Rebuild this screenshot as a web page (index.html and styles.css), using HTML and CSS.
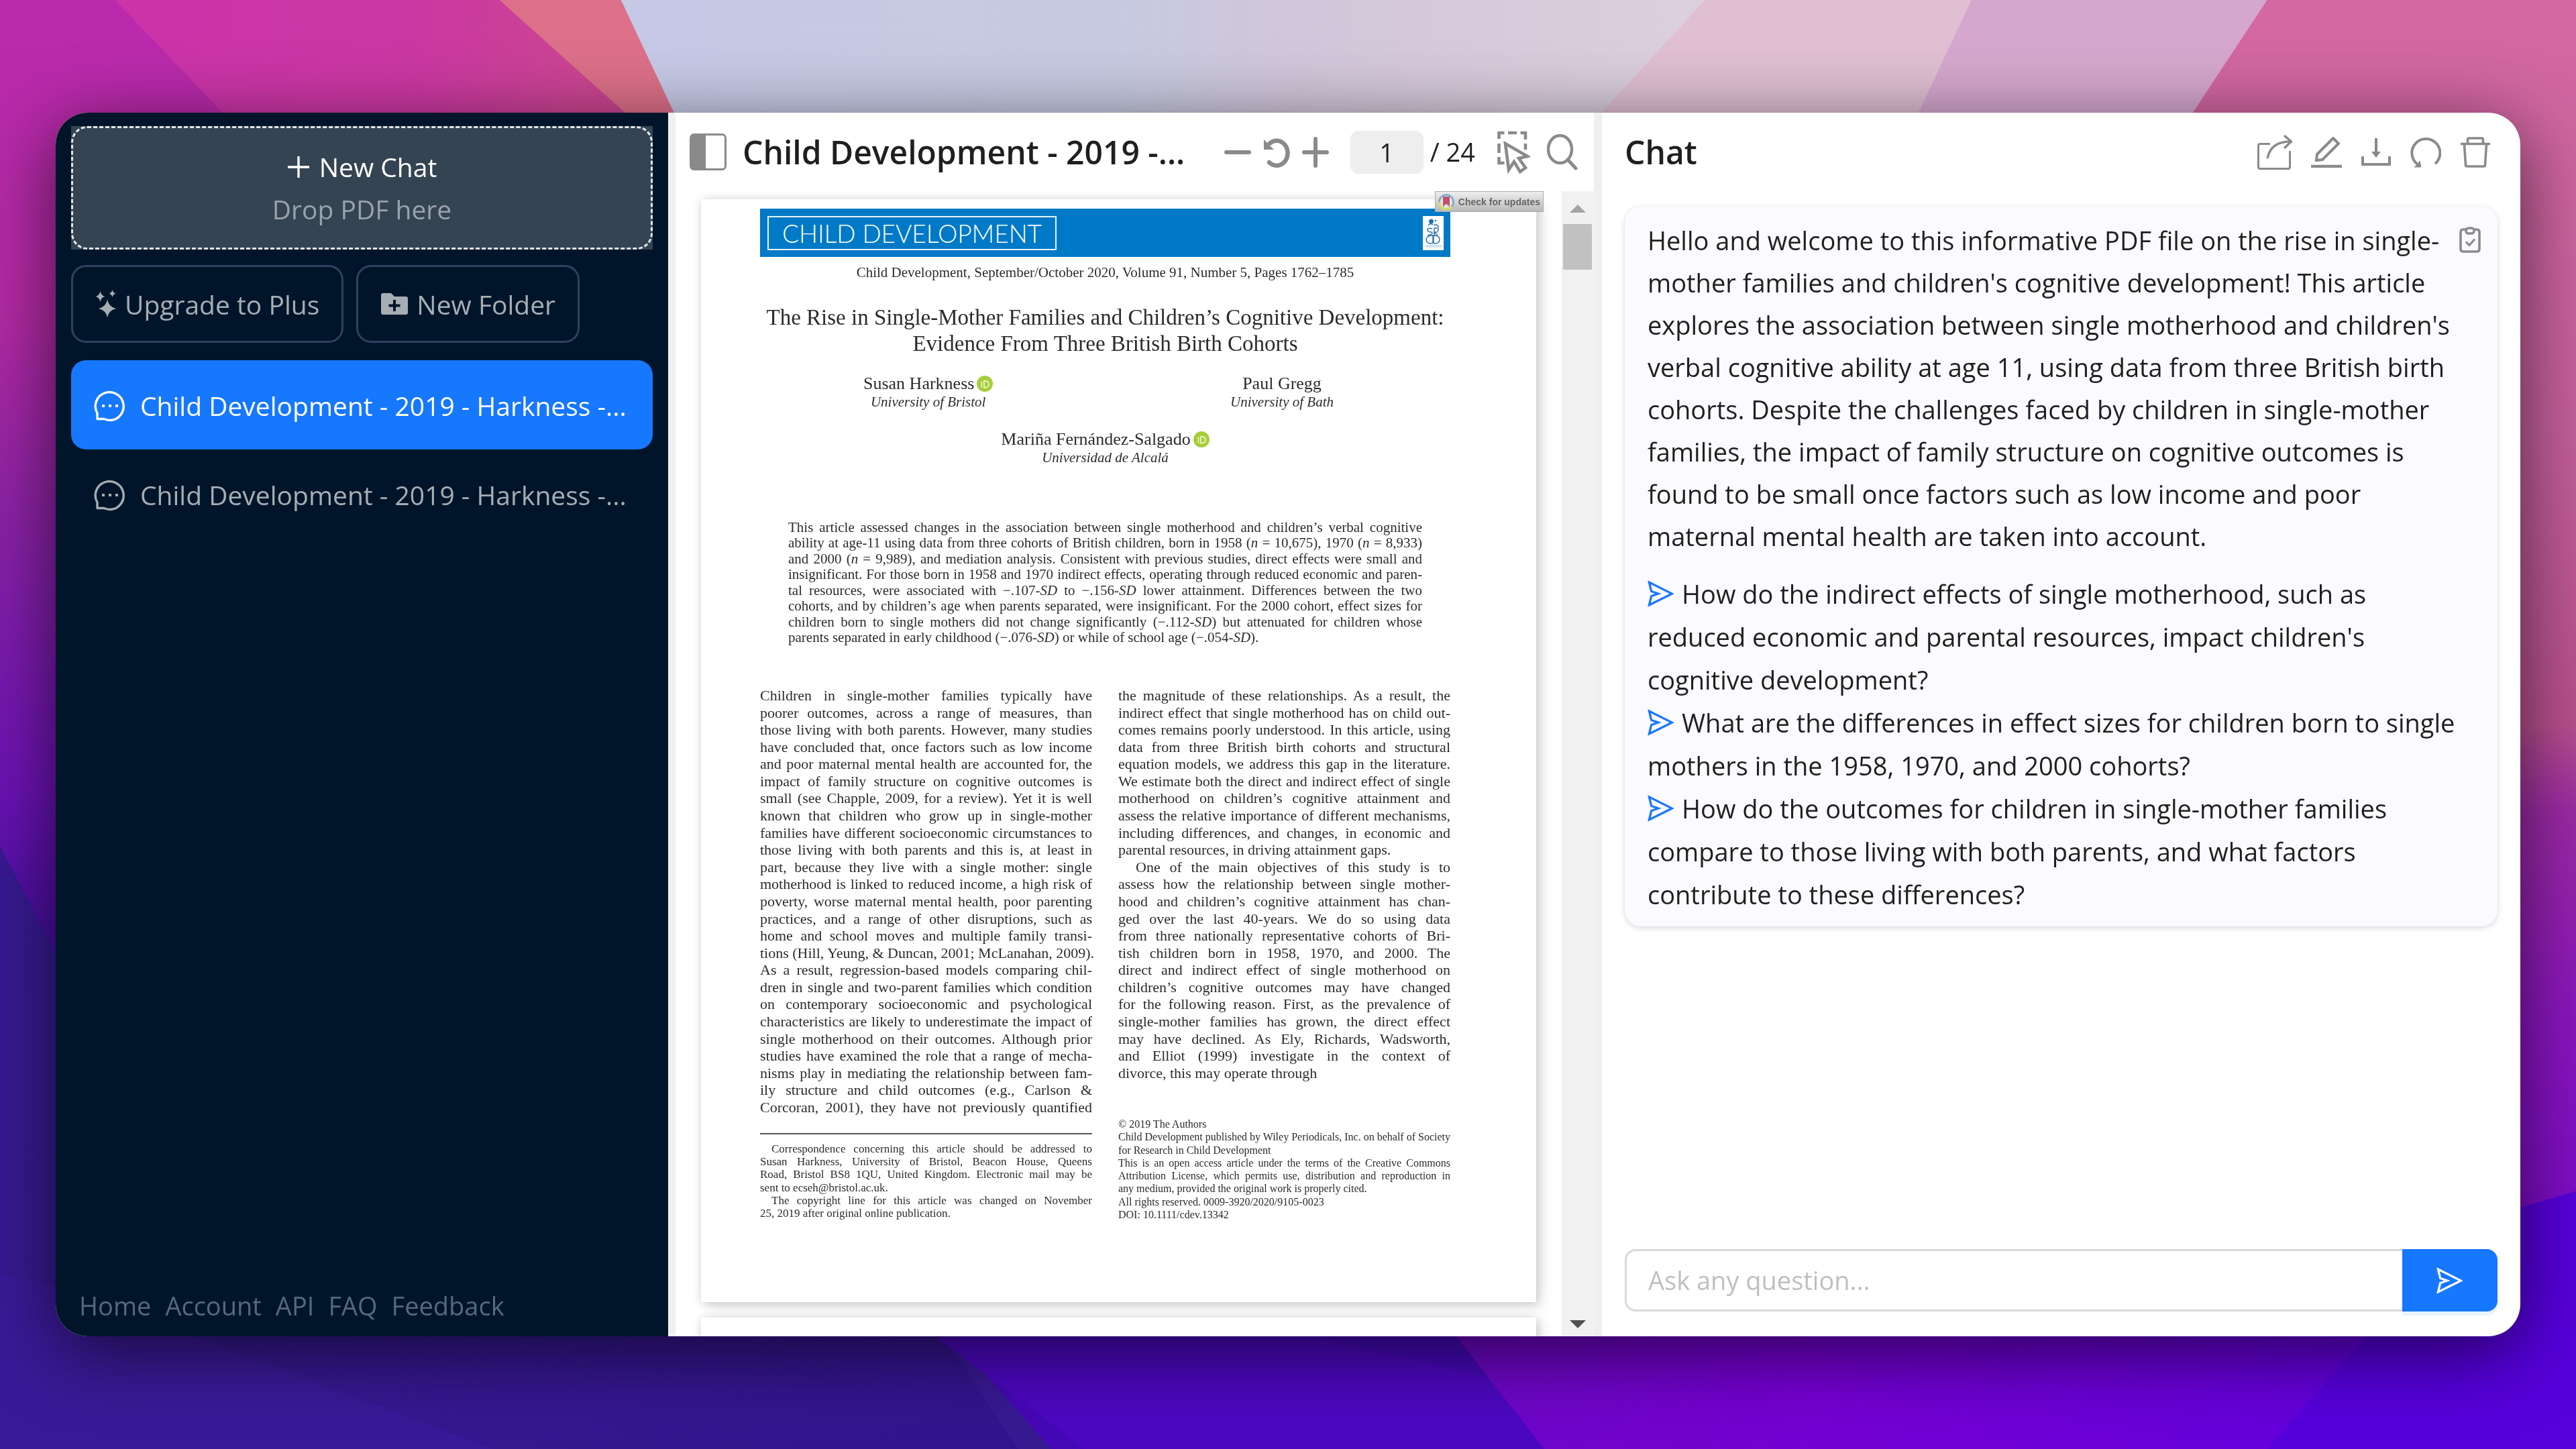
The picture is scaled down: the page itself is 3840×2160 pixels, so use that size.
FILE: index.html
```html
<!DOCTYPE html>
<html lang="en">
<head>
<meta charset="utf-8">
<title>Child Development - Chat</title>
<link rel="stylesheet" href="styles.css">
</head>
<body>
<svg class="wallpaper" viewBox="0 0 1568 882" preserveAspectRatio="none" aria-hidden="true">
  <defs>
    <linearGradient id="edge" x1="0" y1="0" x2="0" y2="1">
      <stop offset="0" stop-color="#bb2aad"/><stop offset=".22" stop-color="#b22aa4"/>
      <stop offset=".36" stop-color="#8a22a6"/><stop offset=".55" stop-color="#6a12b4"/>
      <stop offset=".64" stop-color="#4a0fa0"/><stop offset="1" stop-color="#371a92"/>
    </linearGradient>
    <linearGradient id="magenta" x1="0" y1="0" x2="1" y2="0">
      <stop offset="0" stop-color="#cb33aa"/><stop offset=".4" stop-color="#cb38a2"/><stop offset=".6" stop-color="#cb4592"/>
    </linearGradient>
    <linearGradient id="pale" x1="0" y1="0" x2="1" y2="0">
      <stop offset="0" stop-color="#c6c9e6"/><stop offset=".45" stop-color="#c6cae0"/>
      <stop offset=".62" stop-color="#d2c6da"/><stop offset="1" stop-color="#dccfde"/>
    </linearGradient>
    <linearGradient id="right" x1="0" y1="0" x2="0" y2="1">
      <stop offset="0" stop-color="#d468a2"/><stop offset=".3" stop-color="#c4609c"/>
      <stop offset=".5" stop-color="#b8508e"/><stop offset=".56" stop-color="#9c2aa4"/>
      <stop offset=".7" stop-color="#8a16be"/><stop offset="1" stop-color="#7000d4"/>
    </linearGradient>
    <linearGradient id="violet" x1="0" y1="0" x2="1" y2="0">
      <stop offset="0" stop-color="#6c08c4"/><stop offset=".4" stop-color="#7400d2"/><stop offset="1" stop-color="#6200dc"/>
    </linearGradient>
    <linearGradient id="indigo" x1="0" y1="0" x2="1" y2="0">
      <stop offset="0" stop-color="#371a92"/><stop offset="1" stop-color="#33148e"/>
    </linearGradient>
  </defs>
  <rect width="1568" height="882" fill="url(#edge)"/>
  <polygon points="70,0 320,0 540,200 261,200" fill="url(#magenta)"/>
  <polygon points="304,0 380,0 474,200 527,200" fill="#dc7089"/>
  <polygon points="378,0 1045,0 1000,200 472,200" fill="url(#pale)"/>
  <polygon points="1038,0 1210,0 1116,200 853,200" fill="#dfbfd1"/>
  <polygon points="1200,0 1390,0 1258,200 1106,200" fill="#d5a7ce"/>
  <polygon points="1380,0 1568,0 1568,882 1248,882 1248,200" fill="url(#right)"/>
  <polygon points="0,515 34,580 500,700 620,882 0,882" fill="url(#indigo)"/>
  <polygon points="0,775 34,782 300,882 0,882" fill="#3a1a98"/>
  <polygon points="480,700 900,760 1000,882 640,882" fill="#4508b6"/>
  <polygon points="570,814 800,814 1100,882 660,882" fill="#4c08c0"/>
  <polygon points="868,790 1450,790 1420,882 940,882" fill="url(#violet)"/>
  <polygon points="1568,725 1500,745 1380,882 1568,882" fill="#5600dc"/>
</svg>

<main class="window">
  <aside class="sidebar">
    <div class="dropzone">
      <button class="dropzone-button" type="button">
        <span class="new-chat">
          <svg class="icon-plus" viewBox="0 0 34 34"><path d="M17 1v32M1 17h32" fill="none" stroke="currentColor" stroke-width="3.4"/></svg>
          New Chat
        </span>
        <span class="drop-hint">Drop PDF here</span>
      </button>
    </div>
    <div class="actions">
      <button class="outline-button upgrade" type="button">
        <svg class="icon-spark" viewBox="0 0 32 42"><path d="M18 14.500q2 11 13 13.500q-11 2.500-13 13.500q-2-11-13-13.500q11-2.500 13-13.500zM7.500 2q1.200 6.600 7 8q-5.800 1.400-7 8q-1.200-6.600-7-8q5.800-1.400 7-8zM25.500 0q.9 4.500 5 5.500q-4.100 1-5 5.500q-.9-4.500-5-5.500q4.100-1 5-5.500z" fill="currentColor"/></svg>
        Upgrade to Plus
      </button>
      <button class="outline-button" type="button">
        <svg class="icon-folder" viewBox="0 0 42 34"><path d="M4 1h12l5 5h17q3 0 3 3v21q0 3-3 3H4q-3 0-3-3V4q0-3 3-3z" fill="currentColor"/><path d="M21 11v17M12.500 19.500h17" stroke="#001529" stroke-width="4"/></svg>
        New Folder
      </button>
    </div>
    <nav class="chats">
      <a class="chat-link active" href="#"><svg class="icon-bubble" viewBox="0 0 48 48"><path d="M5 43.500V35A21 21 0 1 1 25 45.500Q19.500 45.500 15 43.500z" fill="none" stroke="currentColor" stroke-width="3.400" stroke-linejoin="round"/><path d="M12 22h4v4h-4zM22 22h4v4h-4zM32 22h4v4h-4z" fill="currentColor"/></svg>Child Development - 2019 - Harkness -...</a>
      <a class="chat-link" href="#"><svg class="icon-bubble" viewBox="0 0 48 48"><path d="M5 43.500V35A21 21 0 1 1 25 45.500Q19.500 45.500 15 43.500z" fill="none" stroke="currentColor" stroke-width="3.400" stroke-linejoin="round"/><path d="M12 22h4v4h-4zM22 22h4v4h-4zM32 22h4v4h-4z" fill="currentColor"/></svg>Child Development - 2019 - Harkness -...</a>
    </nav>
    <footer class="links">
      <a href="#">Home</a><a href="#">Account</a><a href="#">API</a><a href="#">FAQ</a><a href="#">Feedback</a>
    </footer>
  </aside>

  <section class="reader">
    <header class="toolbar">
      <button class="tool" type="button" aria-label="Toggle sidebar"><svg class="icon-panel" viewBox="0 0 55 55"><rect x="1.500" y="1.500" width="52" height="52" rx="5" fill="#fff" stroke="#8a8a8a" stroke-width="3"/><path d="M6 1h18v53H6q-5 0-5-5V6q0-5 5-5z" fill="#8a8a8a"/></svg></button>
      <h1 class="doc-title">Child Development - 2019 -...</h1>
      <div class="zoom-tools">
        <button class="tool" type="button" aria-label="Zoom out"><svg class="icon-zoom" viewBox="0 0 40 46"><path d="M3 23h34" stroke="currentColor" stroke-width="6" stroke-linecap="round"/></svg></button>
        <button class="tool" type="button" aria-label="Reset zoom"><svg class="icon-zoom" viewBox="0 0 40 46"><path d="M9 10.500A16.500 18.500 0 1 1 9 38" fill="none" stroke="currentColor" stroke-width="6.500" stroke-linecap="round"/><path d="M1 4l15 15H1z" fill="currentColor"/></svg></button>
        <button class="tool" type="button" aria-label="Zoom in"><svg class="icon-zoom" viewBox="0 0 40 46"><path d="M3 23h34M20 3v40" stroke="currentColor" stroke-width="6" stroke-linecap="round"/></svg></button>
      </div>
      <div class="pager">
        <input class="page-input" type="text" value="1" aria-label="Page">
        <span>/ 24</span>
      </div>
      <div class="select-tools">
        <button class="tool" type="button" aria-label="Select area"><svg class="icon-select" viewBox="0 0 49 64"><path d="M2.500 12V3h8M16 3h13M34.500 3H42v10M42 19v9M2.500 19v14M2.500 39v9h8" fill="none" stroke="currentColor" stroke-width="4.600"/><path d="M12 19l33 19-13 3 10 14-8 6-9-15-8 12z" fill="#fff" stroke="currentColor" stroke-width="4.600"/></svg></button>
        <button class="tool" type="button" aria-label="Search"><svg class="icon-search" viewBox="0 0 46 54"><ellipse cx="19.500" cy="22.500" rx="17.500" ry="20.500" fill="none" stroke="currentColor" stroke-width="4.400"/><path d="M31 38l12 13" stroke="currentColor" stroke-width="5" stroke-linecap="round"/></svg></button>
      </div>
    </header>

    <div class="viewer">
      <div class="pages">
        <article class="page">
          <div class="badge"><svg class="icon-mark" viewBox="0 0 24 24"><circle cx="12" cy="12" r="10.500" fill="#e6e6e6" stroke="#79a9c8" stroke-width="2.500"/><path d="M1.500 12A10.500 10.500 0 0 0 20 19" fill="none" stroke="#cfdc74" stroke-width="3.500"/><path d="M7 4h10v15l-5-4-5 4z" fill="#c4526e"/></svg>Check for updates</div>
          <div class="banner">
            <span class="journal">CHILD DEVELOPMENT</span>
            <svg class="society" viewBox="0 0 31 51"><rect width="31" height="51" fill="#fff"/><circle cx="12.500" cy="8" r="3.500" fill="#1c74bb"/><circle cx="19" cy="7" r="1.300" fill="#1c74bb"/><path d="M8 14q3-4 7-1M16 14q5-3 8 3M14 19q-8-2-7 2 1 3 6 3 4 3-6 5M17 29V18h5q3 3-1 6h-4l5 5M15 29q-9 0-10 6 0 6 8 6 2 0 2-3zM16 29q9 0 9 6 0 6-7 6-2 0-2-3z" fill="none" stroke="#2b6fa8" stroke-width="1.400"/><path d="M4 44h24M4 46h24" stroke="#a9c3da" stroke-width="1"/></svg>
          </div>
          <p class="citation">Child Development, September/October 2020, Volume 91, Number 5, Pages 1762–1785</p>
          <h2 class="paper-title">The Rise in Single-Mother Families and Children’s Cognitive Development:<br>Evidence From Three British Birth Cohorts</h2>
          <div class="authors">
            <div class="author"><span class="name">Susan Harkness<svg class="orcid" viewBox="0 0 24 24"><circle cx="12" cy="12" r="12" fill="#a6ce39"/><path d="M7.500 8.500v9M11 8v9.500h3q4-1 4-4.800T14 8z" fill="none" stroke="#e8f3c6" stroke-width="1.800"/></svg></span><em>University of Bristol</em></div>
            <div class="author"><span class="name">Paul Gregg</span><em>University of Bath</em></div>
          </div>
          <div class="author last"><span class="name">Mariña Fernández-Salgado<svg class="orcid" viewBox="0 0 24 24"><circle cx="12" cy="12" r="12" fill="#a6ce39"/><path d="M7.500 8.500v9M11 8v9.500h3q4-1 4-4.800T14 8z" fill="none" stroke="#e8f3c6" stroke-width="1.800"/></svg></span><em>Universidad de Alcalá</em></div>

          <div class="lines abstract"><p>
            <span>This article assessed changes in the association between single motherhood and children’s verbal cognitive</span>
            <span>ability at age-11 using data from three cohorts of British children, born in 1958 (<i>n</i> = 10,675), 1970 (<i>n</i> = 8,933)</span>
            <span>and 2000 (<i>n</i> = 9,989), and mediation analysis. Consistent with previous studies, direct effects were small and</span>
            <span>insignificant. For those born in 1958 and 1970 indirect effects, operating through reduced economic and paren-</span>
            <span>tal resources, were associated with −.107-<i>SD</i> to −.156-<i>SD</i> lower attainment. Differences between the two</span>
            <span>cohorts, and by children’s age when parents separated, were insignificant. For the 2000 cohort, effect sizes for</span>
            <span>children born to single mothers did not change significantly (−.112-<i>SD</i>) but attenuated for children whose</span>
            <span class="end">parents separated in early childhood (−.076-<i>SD</i>) or while of school age (−.054-<i>SD</i>).</span>
          </p></div>

          <div class="columns">
            <div class="column">
              <div class="lines body-left"><p>
                <span>Children in single-mother families typically have</span>
                <span>poorer outcomes, across a range of measures, than</span>
                <span>those living with both parents. However, many studies</span>
                <span>have concluded that, once factors such as low income</span>
                <span>and poor maternal mental health are accounted for, the</span>
                <span>impact of family structure on cognitive outcomes is</span>
                <span>small (see Chapple, 2009, for a review). Yet it is well</span>
                <span>known that children who grow up in single-mother</span>
                <span>families have different socioeconomic circumstances to</span>
                <span>those living with both parents and this is, at least in</span>
                <span>part, because they live with a single mother: single</span>
                <span>motherhood is linked to reduced income, a high risk of</span>
                <span>poverty, worse maternal mental health, poor parenting</span>
                <span>practices, and a range of other disruptions, such as</span>
                <span>home and school moves and multiple family transi-</span>
                <span>tions (Hill, Yeung, &amp; Duncan, 2001; McLanahan, 2009).</span>
                <span>As a result, regression-based models comparing chil-</span>
                <span>dren in single and two-parent families which condition</span>
                <span>on contemporary socioeconomic and psychological</span>
                <span>characteristics are likely to underestimate the impact of</span>
                <span>single motherhood on their outcomes. Although prior</span>
                <span>studies have examined the role that a range of mecha-</span>
                <span>nisms play in mediating the relationship between fam-</span>
                <span>ily structure and child outcomes (e.g., Carlson &amp;</span>
                <span>Corcoran, 2001), they have not previously quantified</span>
              </p></div>
              <div class="lines footnote">
                <p>
                  <span class="indent">Correspondence concerning this article should be addressed to</span>
                  <span>Susan Harkness, University of Bristol, Beacon House, Queens</span>
                  <span>Road, Bristol BS8 1QU, United Kingdom. Electronic mail may be</span>
                  <span class="end">sent to ecseh@bristol.ac.uk.</span>
                </p>
                <p>
                  <span class="indent">The copyright line for this article was changed on November</span>
                  <span class="end">25, 2019 after original online publication.</span>
                </p>
              </div>
            </div>
            <div class="column">
              <div class="lines body-right">
                <p>
                  <span>the magnitude of these relationships. As a result, the</span>
                  <span>indirect effect that single motherhood has on child out-</span>
                  <span>comes remains poorly understood. In this article, using</span>
                  <span>data from three British birth cohorts and structural</span>
                  <span>equation models, we address this gap in the literature.</span>
                  <span>We estimate both the direct and indirect effect of single</span>
                  <span>motherhood on children’s cognitive attainment and</span>
                  <span>assess the relative importance of different mechanisms,</span>
                  <span>including differences, and changes, in economic and</span>
                  <span class="end">parental resources, in driving attainment gaps.</span>
                </p>
                <p>
                  <span class="indent">One of the main objectives of this study is to</span>
                  <span>assess how the relationship between single mother-</span>
                  <span>hood and children’s cognitive attainment has chan-</span>
                  <span>ged over the last 40-years. We do so using data</span>
                  <span>from three nationally representative cohorts of Bri-</span>
                  <span>tish children born in 1958, 1970, and 2000. The</span>
                  <span>direct and indirect effect of single motherhood on</span>
                  <span>children’s cognitive outcomes may have changed</span>
                  <span>for the following reason. First, as the prevalence of</span>
                  <span>single-mother families has grown, the direct effect</span>
                  <span>may have declined. As Ely, Richards, Wadsworth,</span>
                  <span>and Elliot (1999) investigate in the context of</span>
                  <span class="end">divorce, this may operate through</span>
                </p>
              </div>
              <div class="lines rights"><p>
                <span class="end">© 2019 The Authors</span>
                <span>Child Development published by Wiley Periodicals, Inc. on behalf of Society</span>
                <span class="end">for Research in Child Development</span>
                <span>This is an open access article under the terms of the Creative Commons</span>
                <span>Attribution License, which permits use, distribution and reproduction in</span>
                <span class="end">any medium, provided the original work is properly cited.</span>
                <span class="end">All rights reserved. 0009-3920/2020/9105-0023</span>
                <span class="end">DOI: 10.1111/cdev.13342</span>
              </p></div>
            </div>
          </div>
        </article>
        <article class="page next"></article>
      </div>
      <div class="scrollbar">
        <svg class="arrow up" viewBox="0 0 24 12"><path d="M12 0l12 12H0z" fill="currentColor"/></svg>
        <div class="thumb"></div>
        <svg class="arrow down" viewBox="0 0 24 12"><path d="M0 0h24L12 12z" fill="currentColor"/></svg>
      </div>
    </div>
  </section>

  <section class="chat">
    <header class="chat-header">
      <h2 class="chat-title">Chat</h2>
      <div class="chat-tools">
        <button class="tool" type="button" aria-label="Share"><svg class="icon-share" viewBox="0 0 52 52"><path d="M19 13.500H4q-2.500 0-2.500 2.500v32q0 2.500 2.500 2.500h42q2.500 0 2.500-2.500V24" fill="none" stroke="currentColor" stroke-width="3"/><path d="M15 35Q20 10 49 10M40 1l10.500 9L40 20" fill="none" stroke="currentColor" stroke-width="3.400"/></svg></button>
        <button class="tool" type="button" aria-label="Rename"><svg class="icon-tool" viewBox="0 0 46 46"><path d="M0 44h46" stroke="currentColor" stroke-width="4.600"/><path d="M33 2l8 8-24 24-9 1 1-9z" fill="none" stroke="currentColor" stroke-width="4"/></svg></button>
        <button class="tool" type="button" aria-label="Download"><svg class="icon-tool" viewBox="0 0 46 46"><path d="M23 2v22" stroke="currentColor" stroke-width="4"/><path d="M16 22h14l-7 9z" fill="currentColor"/><path d="M3 29v12h40V29" fill="none" stroke="currentColor" stroke-width="4"/></svg></button>
        <button class="tool" type="button" aria-label="Reset chat"><svg class="icon-tool" viewBox="0 0 46 46"><path d="M37 40A21 21 0 1 0 11 41" fill="none" stroke="currentColor" stroke-width="4"/><path d="M5.500 45.500h11l-2-10z" fill="currentColor"/></svg></button>
        <button class="tool" type="button" aria-label="Delete"><svg class="icon-tool" viewBox="0 0 46 46"><path d="M1 10.500h44M11.500 10V4q0-2 2-2h19q2 0 2 2v6M6.500 11l2 31q0 2 2 2h25q2 0 2-2l2-31" fill="none" stroke="currentColor" stroke-width="3.600"/></svg></button>
      </div>
    </header>

    <div class="message">
      <button class="tool copy" type="button" aria-label="Copy"><svg class="icon-copy" viewBox="0 0 32 39"><path d="M9 4H6Q2 4 2 8v25q0 4 4 4h20q4 0 4-4V8q0-4-4-4h-3" fill="none" stroke="currentColor" stroke-width="3.600"/><rect x="10" y="2" width="12" height="8" rx="3.500" fill="none" stroke="currentColor" stroke-width="3.400"/><path d="M10 22.500l5 5 8-9" fill="none" stroke="currentColor" stroke-width="3"/></svg></button>
      <p class="greeting">Hello and welcome to this informative PDF file on the rise in single-mother families and children's cognitive development! This article explores the association between single motherhood and children's verbal cognitive ability at age 11, using data from three British birth cohorts. Despite the challenges faced by children in single-mother families, the impact of family structure on cognitive outcomes is found to be small once factors such as low income and poor maternal mental health are taken into account.</p>
      <ul class="questions">
        <li><svg class="icon-send" viewBox="64 64 896 896"><use href="#send"/></svg>How do the indirect effects of single motherhood, such as reduced economic and parental resources, impact children's cognitive development?</li>
        <li><svg class="icon-send" viewBox="64 64 896 896"><use href="#send"/></svg>What are the differences in effect sizes for children born to single mothers in the 1958, 1970, and 2000 cohorts?</li>
        <li><svg class="icon-send" viewBox="64 64 896 896"><use href="#send"/></svg>How do the outcomes for children in single-mother families compare to those living with both parents, and what factors contribute to these differences?</li>
      </ul>
    </div>

    <form class="ask">
      <input class="ask-input" type="text" placeholder="Ask any question..." aria-label="Ask any question">
      <button class="ask-button" type="button" aria-label="Send"><svg class="icon-submit" viewBox="64 64 896 896"><path id="send" fill="currentColor" d="M931.400 498.900L94.900 79.500c-3.400-1.700-7.300-2.100-11-1.200a15.990 15.990 0 00-11.700 19.300l86.200 352.200c1.300 5.300 5.200 9.600 10.400 11.300l147.700 50.700-147.600 50.700c-5.200 1.800-9.100 6-10.300 11.300L72.200 926.500c-.9 3.700-.5 7.600 1.200 10.900 3.900 7.900 13.500 11.100 21.500 7.200l836.500-417c3.100-1.500 5.600-4.100 7.200-7.100 3.900-8 .7-17.600-7.200-21.600zM170.800 826.300l50.300-205.600 295.200-101.300c2.300-.8 4.200-2.600 5-5 1.400-4.200-.8-8.700-5-10.200L221.100 403 171 198.200l628 314.900-628.200 313.200z"/></svg></button>
    </form>
  </section>
</main>
</body>
</html>
```
FILE: styles.css
```css
* {
  box-sizing: border-box;
}

body {
  margin: 0;
  height: 100vh;
  padding: 168px 83px;
  display: flex;
  overflow: hidden;
  background: #371a92;
  color: #1f1f1f;
  font: 38px/63px "Open Sans", "Noto Sans", sans-serif;
}

h1, h2, p, ul {
  margin: 0;
  padding: 0;
  font-weight: inherit;
}

button, input {
  font: inherit;
  color: inherit;
}

button {
  padding: 0;
  border: 0;
  background: none;
}

a {
  color: inherit;
  text-decoration: none;
}

svg {
  display: block;
  flex: none;
}

.wallpaper {
  position: fixed;
  inset: 0;
  width: 100%;
  height: 100%;
  z-index: -1;
}

.window {
  flex: 1;
  min-width: 0;
  display: grid;
  grid-template-columns: 913fr 1380fr 1381fr;
  grid-template-rows: minmax(0, 1fr);
  overflow: hidden;
  border-radius: 48px;
  background: #fff;
  box-shadow: 0 24px 110px rgba(0, 0, 0, .62);
}

/* Sidebar */

.sidebar {
  display: flex;
  flex-direction: column;
  padding: 20px 23px 14px;
  background: #001529;
  color: #a6adb4;
  font-size: 39px;
}

.dropzone {
  background: #344452;
}

.dropzone-button {
  width: 100%;
  height: 184px;
  display: flex;
  flex-direction: column;
  align-items: center;
  justify-content: center;
  border: 3px dashed #e4e7ea;
  border-radius: 24px;
}

.new-chat {
  display: flex;
  align-items: center;
  gap: 14px;
  color: #fff;
}

.drop-hint {
  color: #9aa2ab;
}

.icon-plus {
  width: 34px;
  height: 34px;
}

.actions {
  display: flex;
  gap: 19px;
  margin-top: 23px;
}

.outline-button {
  height: 116px;
  padding: 0 33px;
  display: flex;
  align-items: center;
  gap: 12px;
  border: 3px solid #2f4260;
  border-radius: 22px;
}

.icon-spark {
  width: 32px;
  height: 42px;
}

.icon-folder {
  width: 42px;
  height: 34px;
}

.chats {
  margin-top: 26px;
}

.chat-link {
  height: 133px;
  padding: 2px 0 0 34px;
  display: flex;
  align-items: center;
  gap: 21px;
  border-radius: 22px;
  white-space: nowrap;
}

.chat-link.active {
  background: #1677ff;
  color: #fff;
}

.icon-bubble {
  width: 48px;
  height: 48px;
}

.links {
  display: flex;
  gap: 21px;
  margin-top: auto;
  padding-left: 12px;
  color: #566880;
  font-size: 38px;
}

/* PDF reader */

.reader {
  display: flex;
  flex-direction: column;
  min-width: 0;
  border-left: 11px solid #f0f0f0;
}

.tool {
  color: #8a8a8a;
}

.toolbar {
  height: 117px;
  padding: 0 24px 0 21px;
  display: flex;
  align-items: center;
}

.icon-panel {
  width: 55px;
  height: 55px;
}

.doc-title {
  flex: 1;
  min-width: 0;
  margin-left: 24px;
  font-size: 48px;
  font-weight: 600;
  white-space: nowrap;
}

.zoom-tools {
  display: flex;
  gap: 18px;
}

.icon-zoom {
  width: 40px;
  height: 46px;
}

.pager {
  display: flex;
  align-items: center;
  gap: 10px;
  margin-left: 32px;
}

.page-input {
  width: 109px;
  height: 64px;
  padding: 0;
  border: 0;
  border-radius: 12px;
  background: #eee;
  text-align: center;
}

.select-tools {
  display: flex;
  align-items: center;
  gap: 25px;
  margin-left: 33px;
}

.icon-select {
  width: 49px;
  height: 64px;
}

.icon-search {
  width: 46px;
  height: 54px;
}

.viewer {
  flex: 1;
  min-height: 0;
  display: flex;
}

.pages {
  flex: 1;
  min-width: 0;
  overflow: hidden;
  padding: 12px 38px 0;
}

.page {
  position: relative;
  padding: 14px 128px 121px 88px;
  background: #fff;
  box-shadow: 6px 6px 18px rgba(0, 0, 0, .16), 0 0 14px rgba(0, 0, 0, .12);
  color: #2b2b30;
  font-family: "Liberation Serif", serif;
}

.page.next {
  height: 1645px;
  margin-top: 23px;
}

.badge {
  position: absolute;
  top: -12px;
  right: -11px;
  height: 31px;
  padding: 0 4px;
  display: flex;
  align-items: center;
  gap: 6px;
  border: 1px solid #aaa;
  background: linear-gradient(#ededed, #b9b9b9);
  color: #666;
  font: bold 14px/28px "Liberation Sans", sans-serif;
}

.icon-mark {
  width: 24px;
  height: 24px;
}

.banner {
  height: 72px;
  padding: 0 10px 0 11px;
  display: flex;
  align-items: center;
  justify-content: space-between;
  background: #0079c7;
}

.journal {
  padding: 0 20px;
  border: 2px solid #e8f3fb;
  color: #fff;
  font: 300 37px/47px Lato, sans-serif;
}

.society {
  width: 31px;
  height: 51px;
}

.citation {
  margin-top: 9px;
  font-size: 21px;
  line-height: 28px;
  text-align: center;
}

.paper-title {
  margin-top: 34px;
  font-size: 33px;
  line-height: 39px;
  text-align: center;
}

.authors {
  display: flex;
  justify-content: space-between;
  margin-top: 26px;
  padding: 0 174px 0 154px;
}

.author {
  display: flex;
  flex-direction: column;
  align-items: center;
  font-size: 21px;
  line-height: 26px;
}

.author.last {
  margin-top: 29px;
}

.name {
  display: flex;
  align-items: center;
  gap: 4px;
  font-size: 26px;
  line-height: 28px;
}

.orcid {
  width: 24px;
  height: 24px;
}

/* Typeset text: each line is spread to the full measure */

.lines {
  display: flex;
  flex-direction: column;
  justify-content: space-between;
}

.lines p {
  display: contents;
}

.lines span {
  text-align: justify;
  text-align-last: justify;
  white-space: nowrap;
}

.lines .end {
  text-align-last: left;
}

.lines .indent {
  padding-left: 17px;
}

.abstract {
  height: 186px;
  margin: 80px 42px 0;
  font-size: 21px;
  line-height: 22px;
}

.columns {
  display: grid;
  grid-template-columns: minmax(0, 1fr) minmax(0, 1fr);
  gap: 39px;
  margin-top: 64px;
}

.body-left, .body-right {
  font-size: 22px;
  line-height: 24px;
}

.body-left {
  height: 638px;
}

.body-right {
  height: 587px;
}

.body-right .indent {
  padding-left: 26px;
}

.footnote, .rights {
  font-size: 17px;
  line-height: 19px;
}

.footnote {
  height: 129px;
  margin-top: 26px;
  padding-top: 12px;
  border-top: 2px solid #555;
}

.rights {
  height: 154px;
  margin-top: 54px;
  font-size: 16px;
}

.scrollbar {
  width: 48px;
  padding: 20px 3px 12px 2px;
  display: flex;
  flex-direction: column;
  align-items: center;
  background: #f1f1f1;
}

.arrow {
  width: 24px;
  height: 12px;
}

.arrow.up {
  color: #a3a3a3;
}

.arrow.down {
  margin-top: auto;
  color: #505050;
}

.thumb {
  width: 100%;
  height: 68px;
  margin-top: 17px;
  background: #c1c1c1;
}

/* Chat */

.chat {
  display: flex;
  flex-direction: column;
  min-width: 0;
  padding: 0 34px 37px;
  border-left: 12px solid #efefef;
}

.chat-header {
  height: 117px;
  padding-right: 10px;
  display: flex;
  align-items: center;
  justify-content: space-between;
}

.chat-title {
  font-size: 48px;
  font-weight: 600;
}

.chat-tools {
  display: flex;
  align-items: center;
  gap: 28px;
}

.icon-tool {
  width: 46px;
  height: 46px;
}

.icon-share {
  width: 52px;
  height: 52px;
}

.message {
  position: relative;
  margin-top: 23px;
  padding: 19px 34px 16px;
  border-radius: 24px;
  background: #fafaff;
  box-shadow: 0 2px 8px rgba(0, 0, 0, .16);
}

.copy {
  position: absolute;
  top: 30px;
  right: 25px;
}

.icon-copy {
  width: 32px;
  height: 39px;
}

.greeting {
  padding-right: 30px;
}

.questions {
  margin-top: 22px;
  padding-right: 20px;
  line-height: 64px;
  list-style: none;
}

.icon-send {
  display: inline-block;
  width: 40px;
  height: 40px;
  margin-right: 11px;
  vertical-align: -5px;
  color: #1677ff;
}

.ask {
  display: flex;
  height: 93px;
  margin-top: auto;
}

.ask-input {
  flex: 1;
  min-width: 0;
  padding: 0 32px;
  border: 3px solid #d9d9d9;
  border-right: 0;
  border-radius: 16px 0 0 16px;
  background: #fff;
}

.ask-input::placeholder {
  color: #bfbfbf;
  opacity: 1;
}

.ask-button {
  width: 142px;
  display: flex;
  align-items: center;
  justify-content: center;
  border-radius: 0 16px 16px 0;
  background: #1677ff;
  box-shadow: 0 6px 0 rgba(5, 145, 255, .1);
  color: #fff;
}

.icon-submit {
  width: 40px;
  height: 40px;
}
```
